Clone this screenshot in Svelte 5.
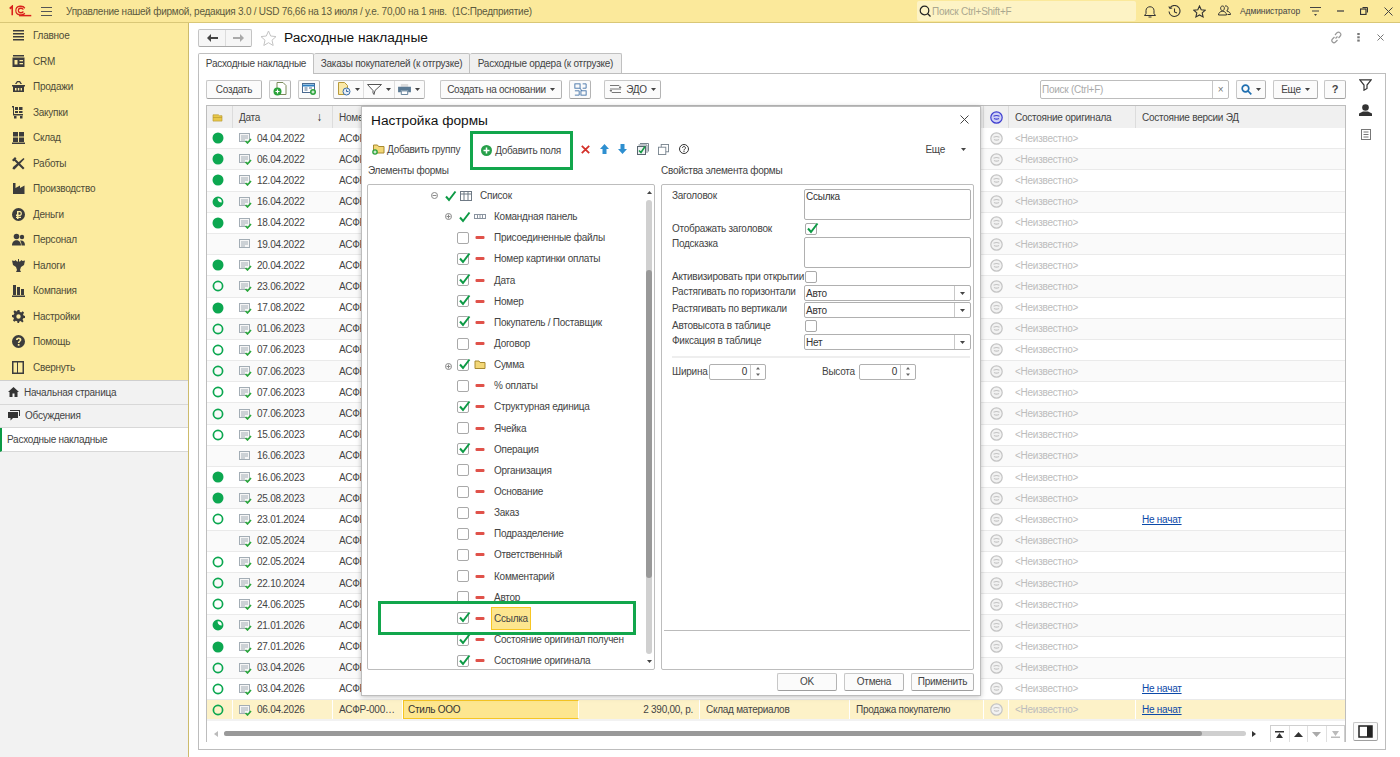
<script>
    const menu = [
        ['menu', 'Главное'], ['crm', 'CRM'], ['basket', 'Продажи'], ['cart', 'Закупки'],
        ['grid', 'Склад'], ['tools', 'Работы'], ['factory', 'Производство'], ['rub', 'Деньги'],
        ['people', 'Персонал'], ['eagle', 'Налоги'], ['bars', 'Компания'], ['gear', 'Настройки'],
        ['help', 'Помощь'], ['panel', 'Свернуть']
    ]

    // status: f - full, o - open, p - partial; doc: true when the document is posted
    const rows = [
        ['f', 1, '04.04.2022'], ['f', 1, '06.04.2022'], ['f', 1, '12.04.2022'], ['p', 1, '16.04.2022'],
        ['f', 1, '18.04.2022'], ['', 0, '19.04.2022'], ['f', 1, '20.04.2022'], ['o', 1, '23.06.2022'],
        ['f', 1, '17.08.2022'], ['o', 1, '01.06.2023'], ['o', 1, '07.06.2023'], ['o', 1, '07.06.2023'],
        ['o', 1, '07.06.2023'], ['o', 1, '07.06.2023'], ['o', 1, '15.06.2023'], ['', 0, '16.06.2023'],
        ['f', 1, '16.06.2023'], ['f', 1, '25.08.2023'], ['o', 1, '23.01.2024', 1], ['', 1, '02.05.2024'],
        ['o', 1, '02.05.2024'], ['o', 1, '22.10.2024'], ['o', 1, '24.06.2025'], ['p', 1, '21.01.2026'],
        ['f', 1, '27.01.2026'], ['o', 1, '03.04.2026'], ['o', 1, '03.04.2026', 1], ['o', 1, '06.04.2026', 1, 1]
    ]

    const leaves = [
        ['Присоединенные файлы', 0], ['Номер картинки оплаты', 1], ['Дата', 1], ['Номер', 1],
        ['Покупатель / Поставщик', 1], ['Договор', 0], ['Сумма', 1, 'folder'], ['% оплаты', 0],
        ['Структурная единица', 1], ['Ячейка', 0], ['Операция', 1], ['Организация', 0],
        ['Основание', 0], ['Заказ', 0], ['Подразделение', 0], ['Ответственный', 0],
        ['Комментарий', 0], ['Автор', 0], ['Ссылка', 1, 'sel'], ['Состояние оригинал получен', 1],
        ['Состояние оригинала', 1]
    ]
</script>

{#snippet tick()}
    <svg class="tick" width="13" height="12" viewBox="0 0 13 12"><path d="M2 6.500 5 10 11.500 1.500" fill="none" stroke="#0d9a45" stroke-width="2"/></svg>
{/snippet}

{#snippet checkbox(on)}
    <span class="cb">{#if on}{@render tick()}{/if}</span>
{/snippet}

{#snippet docIcon(posted)}
    <svg class="doc" width="13" height="12" viewBox="0 0 13 12">
        <rect x="0.500" y="1.500" width="10" height="8" fill="#f6f6f6" stroke="#a3adb5"/>
        <path d="M2 4h7M2 6h7M2 8h4" stroke="#a3adb5"/>
        {#if posted}<path d="M6.500 9 8.500 11l3.500-4" fill="none" stroke="#2aa83c" stroke-width="1.600"/>{/if}
    </svg>
{/snippet}

{#snippet status(s)}
    {#if s === 'f'}
        <svg width="12" height="12" viewBox="0 0 12 12"><circle cx="6" cy="6" r="5.500" fill="#0ca750"/></svg>
    {:else if s === 'o'}
        <svg width="12" height="12" viewBox="0 0 12 12"><circle cx="6" cy="6" r="4.600" fill="none" stroke="#0ca750" stroke-width="1.700"/></svg>
    {:else if s === 'p'}
        <svg width="12" height="12" viewBox="0 0 12 12"><circle cx="6" cy="6" r="4.600" fill="#fff" stroke="#0ca750" stroke-width="1.700"/><path d="M5.500 1.500A4.500 4.500 0 1 0 10.500 6.500Q5.500 7 5.500 1.500z" fill="#0ca750"/></svg>
    {/if}
{/snippet}

{#snippet stateIcon(blue)}
    <svg width="13" height="13" viewBox="0 0 13 13">
        <circle cx="6.500" cy="6.500" r="5.700" fill={blue ? '#cfd0f5' : '#f2f2f2'} stroke={blue ? '#3f3fd0' : '#c4c4c4'} stroke-width="1.200"/>
        <path d="M3.500 5.200c2-1 4-1 6 0M4 7.500c1.600.8 3.400.8 5 0" fill="none" stroke={blue ? '#3f3fd0' : '#c4c4c4'} stroke-width="1.100"/>
    </svg>
{/snippet}

{#snippet caret()}
    <svg class="caret" width="5" height="3" viewBox="0 0 5 3"><path d="M0 0h5L2.500 3z" fill="#444"/></svg>
{/snippet}

{#snippet navIcon(name)}
    <svg width="13" height="13" viewBox="0 0 13 13" fill="#3c3c3c">
        {#if name === 'menu'}
            <path d="M1 1h11v1.500H1zM1 4h11v1.500H1zM1 7h11v1.500H1zM1 10h11v1.500H1z"/>
        {:else if name === 'crm'}
            <path d="M1 0h11v1.500H1zM0.500 2.500h12V12H.5zM2.500 5v4.500h3V5zM7.500 5v1.300h3.500V5zM7.500 8v1.300h3.500V8z" fill-rule="evenodd"/>
        {:else if name === 'basket'}
            <path d="M0 5h13v1.500H12V12H1V6.500H0zM3 8v2.500h1.500V8zM5.800 8v2.500h1.500V8zM8.600 8v2.500H10V8zM3 4 5 1h3l2 3H8.500L7.300 2.300H5.700L4.500 4z" fill-rule="evenodd"/>
        {:else if name === 'cart'}
            <path d="M0 0h2v8h9v1.500H1V1.500H0zM3 1h3v3H3zM7 1h3.500v3H7zM3 5h3v2H3zM7 5h3.500v2H7zM2 10h2.500v2.500H2zM8 10h2.500v2.500H8z"/>
        {:else if name === 'grid'}
            <path d="M1 1h5v4.500H1zM7 1h5v4.500H7zM1 6.500h5V11H1zM7 6.500h5V11H7zM0 11.500h13V13H0z"/>
        {:else if name === 'tools'}
            <path d="M1 2.500 2.500 1l10 10-1.500 1.500zM11.500 1l1 1-10 10.500-2-.5.500-2zM0 3l3-3 1.500 1.500-3 3z"/>
        {:else if name === 'factory'}
            <path d="M1 1h2.500v5L8 3.500V6l4.500-2.500V12H1z"/>
        {:else if name === 'rub'}
            <path d="M6.500 0a6.500 6.500 0 1 1 0 13 6.500 6.500 0 0 1 0-13zM5 3v3.500H4V8h1v.8H4V10h1v1h1.500v-1H9V8.800H6.500V8H8c2.500 0 2.500-5 0-5zM6.500 4.200H8c.9 0 .9 2.500 0 2.500H6.500z" fill-rule="evenodd"/>
        {:else if name === 'people'}
            <circle cx="4.500" cy="3.500" r="2.800"/><circle cx="10" cy="4" r="2.200"/><path d="M0 12.500c0-7 9-7 9 0zM9.500 12.500h3.500c0-4-2-5.500-5-5 1 1 1.500 3 1.500 5z"/>
        {:else if name === 'eagle'}
            <path d="M6 0h1v2.500h1l1.500-1.500 1 1L13 1.500 12 6 9 8 8 11l1 2H4l1-2-1-3-3-2L0 1.500 2.500 2l1-1L5 2.500h1z"/>
        {:else if name === 'bars'}
            <path d="M1 1h3v10H1zM5 3h3v8H5zM9 5h3v6H9zM0 11.500h13V13H0z"/>
        {:else if name === 'gear'}
            <path d="M5.500 0h2l.3 1.800 1.400.6L10.700 1.300l1.400 1.400L11 4.200l.6 1.400 1.400.4v2l-1.800.3-.6 1.400 1 1.500-1.400 1.400L8.700 11l-1.300.5L7 13H5.500l-.3-1.800L3.800 10.700 2.300 11.700.9 10.300 2 8.800 1.400 7.400 0 7V5l1.800-.3.600-1.400-1-1.600L2.800.3 4.300 1.400l1-.4zM6.500 4.300a2.200 2.200 0 1 0 0 4.400 2.200 2.200 0 0 0 0-4.400z" fill-rule="evenodd"/>
        {:else if name === 'help'}
            <path d="M6.500 0a6.500 6.500 0 1 1 0 13 6.500 6.500 0 0 1 0-13zM4 5h1.700c0-1.500 2-1.500 2 0 0 1-1.900 1.200-1.900 3h1.700c0-1.500 1.900-1.500 1.900-3.200C9.400 1.800 4 1.800 4 5zM5.800 9v1.700h1.700V9z" fill-rule="evenodd"/>
        {:else if name === 'panel'}
            <path d="M0 0h12v13H0zM1.500 1.500v10h3.500v-10z M6 1.500v10h4.500v-10z" fill-rule="evenodd"/>
        {/if}
    </svg>
{/snippet}

<div class="app">
    <header class="top">
        <svg class="logo" width="23" height="12" viewBox="0 0 32 13" preserveAspectRatio="none" fill="none" stroke="#d9201c">
            <path d="M1 4 4.500 1.500V11" stroke-width="2.200"/>
            <path d="M22 3.500C20 .5 9.500 0 9.500 6s10.500 5.500 12.500 3M20 5C18.500 3 13 3 13 6s5.500 3 7 1" stroke-width="1.600"/>
            <path d="M14 11.500h17" stroke-width="1.600"/>
        </svg>
        <svg class="burger" width="11" height="9" viewBox="0 0 11 9"><path d="M0 .5h11M0 4.500h11M0 8.500h11" stroke="#555"/></svg>
        <span class="app-title">Управление нашей фирмой, редакция 3.0 / USD 76,66 на 13 июля / у.е. 70,00 на 1 янв. &nbsp;(1С:Предприятие)</span>
        <div class="gsearch">
            <svg width="12" height="12" viewBox="0 0 12 12" fill="none" stroke="#222" stroke-width="1.200"><circle cx="5.500" cy="5.500" r="4.300"/><path d="m8.500 8.500 3 3"/></svg>
            <span>Поиск Ctrl+Shift+F</span>
        </div>
        <div class="top-icons">
            <svg width="12" height="13" viewBox="0 0 12 13" fill="none" stroke="#333"><path d="M.5 10.500h11L10 8.500V5.500c0-5-8-5-8 0v3zM4.500 12h3"/></svg>
            <svg width="13" height="13" viewBox="0 0 13 13" fill="none" stroke="#333" stroke-width="1.100"><path d="M2.200 2.500A5.500 5.500 0 1 1 1 6.500M.8 1.500 2 3.500l2.200-.5M6.500 3.500v3.500l2.500 1"/></svg>
            <svg width="13" height="13" viewBox="0 0 13 13" fill="none" stroke="#333" stroke-width="1.100"><path d="m6.500 1 1.700 3.700 4 .5-3 2.700.9 4-3.600-2-3.600 2 .9-4-3-2.700 4-.5z"/></svg>
            <svg width="13" height="12" viewBox="0 0 13 12" fill="none" stroke="#333"><path d="M4.500 1c-2.500 0-2.500 4 0 5-2.500.5-4 2-4 4h8c0-2-1.500-3.500-4-4 2.500-1 2.500-5 0-5zM7 1c2-.5 3.500 1 3 3-.2 1-.7 1.500-1.300 2 2 .5 3.800 1.500 3.800 3.500h-3"/></svg>
        </div>
        <span class="user">Администратор</span>
        <div class="win">
            <svg width="11" height="9" viewBox="0 0 11 9"><path d="M0 .5h11M2 4h7" stroke="#444"/><path d="M4 7h3L5.500 9z" fill="#444"/></svg>
            <svg width="7" height="2" viewBox="0 0 7 2"><path d="M0 1h7" stroke="#444" stroke-width="1.300"/></svg>
            <svg width="8" height="8" viewBox="0 0 8 8" fill="none" stroke="#333"><rect x=".5" y="2" width="5.500" height="5.500" stroke-width="1.200"/><path d="M2.500 .5h5v5"/></svg>
            <svg width="9" height="9" viewBox="0 0 9 9"><path d="m.5.5 8 8m0-8-8 8" stroke="#444"/></svg>
        </div>
    </header>

    <div class="body">
        <aside class="side">
            <nav class="nav">
                {#each menu as [icon, label]}
                    <div class="nav-item">
                        {@render navIcon(icon)}
                        <span>{label}</span>
                    </div>
                {/each}
            </nav>
            <div class="open-list">
                <div class="open-item">
                    <svg width="11" height="10" viewBox="0 0 11 10" fill="#333"><path d="M5.500 0 11 5H9.500v5H6.500V6.500h-2V10h-3V5H0z"/></svg>
                    <span>Начальная страница</span>
                </div>
                <div class="open-item">
                    <svg width="12" height="11" viewBox="0 0 12 11" fill="#333"><path d="M2 0h10v6h-1V1H2zM0 2h10v6H5L2.500 10.500V8H0z"/></svg>
                    <span>Обсуждения</span>
                </div>
                <div class="open-item current"><span>Расходные накладные</span></div>
            </div>
        </aside>

        <main class="main">
            <div class="head">
                <div class="nav-btns">
                    <button class="arrow">
                        <svg width="11" height="8" viewBox="0 0 11 8"><path d="M4 0v3h7v2H4v3L0 4z" fill="#444"/></svg>
                    </button>
                    <button class="arrow">
                        <svg width="11" height="8" viewBox="0 0 11 8"><path d="M7 0v3H0v2h7v3l4-4z" fill="#aaa"/></svg>
                    </button>
                </div>
                <svg class="star" width="17" height="16" viewBox="0 0 17 16"><path d="m8.500 1 2.200 5 5.300.6-4 3.600 1.200 5.300-4.700-2.800-4.700 2.800 1.200-5.300-4-3.600 5.300-.6z" fill="#fff" stroke="#c4c4c4"/></svg>
                <h1>Расходные накладные</h1>
                <div class="head-tools">
                    <svg class="link" width="13" height="13" viewBox="0 0 13 13" fill="none" stroke="#999" stroke-width="1.200"><path d="M5.500 7.500 7.500 5.500M5 4l2-2.300c2-1.800 5 1 3.300 3.300L8.500 7M4.500 6 2.500 8c-2 2 1 5 3 3L7.500 9"/></svg>
                    <svg width="3" height="9" viewBox="0 0 3 11" fill="#777"><rect y="0" width="3" height="2.500"/><rect y="4" width="3" height="2.500"/><rect y="8" width="3" height="2.500"/></svg>
                    <svg width="7" height="7" viewBox="0 0 7 7"><path d="m.5.5 6 6m0-6-6 6" stroke="#777"/></svg>
                </div>
            </div>

            <div class="tabs">
                <div class="tab active">Расходные накладные</div>
                <div class="tab w2">Заказы покупателей (к отгрузке)</div>
                <div class="tab w3">Расходные ордера (к отгрузке)</div>
            </div>

            <section class="panel">
                <div class="work">
                    <div class="toolbar">
                        <button class="btn create">Создать</button>
                        <button class="btn ico">
                            <svg width="14" height="14" viewBox="0 0 14 14"><path d="M4 .5h6l3 3v9H4z" fill="#fff" stroke="#7a8a5a"/><circle cx="4.500" cy="9.500" r="4" fill="#2aa23a"/><path d="M2.500 9.500h4M4.500 7.500v4" stroke="#fff" stroke-width="1.200"/></svg>
                        </button>
                        <button class="btn ico">
                            <svg width="15" height="14" viewBox="0 0 15 14"><rect x=".5" y="1.500" width="12" height="9" fill="#fff" stroke="#4a6a90"/><path d="M.5 3.500h12" stroke="#2b7fc2" stroke-width="2"/><path d="M2.500 6h3M7 6h3M2.500 8h3" stroke="#4a6a90"/><circle cx="11" cy="10" r="3" fill="#2aa23a"/><path d="M9.500 10h3M11 8.500v3" stroke="#fff"/></svg>
                        </button>
                        <div class="group">
                            <button class="seg">
                                <svg width="14" height="14" viewBox="0 0 14 14"><path d="M1.500.5h6l3 3v9h-9z" fill="#fbe9a8" stroke="#b89a3a"/><circle cx="9.500" cy="9.500" r="3.500" fill="#e8eef6" stroke="#3a6ea8"/><path d="M9.500 7.500v2h2" stroke="#3a6ea8" fill="none"/></svg>
                                {@render caret()}
                            </button>
                            <button class="seg">
                                <svg width="15" height="11" viewBox="0 0 15 11"><path d="M.5.500h14L8 6.500l-1 4-1-1.500V6.500z" fill="#fff" stroke="#555"/></svg>
                                {@render caret()}
                            </button>
                            <button class="seg">
                                <svg width="13" height="11" viewBox="0 0 14 12"><path d="M3 0h8v3H3z" fill="#ddd"/><path d="M0 3h14v6h-3V7H3v2H0z" fill="#5b7a94"/><path d="M3.500 7.500h7v4h-7z" fill="#fff" stroke="#5b7a94"/></svg>
                                {@render caret()}
                            </button>
                        </div>
                        <button class="btn basis">Создать на основании {@render caret()}</button>
                        <button class="btn ico">
                            <svg width="13" height="13" viewBox="0 0 15 15" fill="none" stroke="#3d6ea5"><rect x="1" y="1" width="6" height="5"/><rect x="8" y="9" width="6" height="5"/><path d="M10 1h4v5h-4M1 9h5v5H1"/><path d="M7 6l2 3" /></svg>
                        </button>
                        <button class="btn edo">
                            <svg width="13" height="12" viewBox="0 0 13 12" fill="none" stroke="#777"><path d="M1 2.500h9l2 2-2 0M12 9.500H3L1 7.500h2M1 6h11"/></svg>
                            ЭДО {@render caret()}
                        </button>
                        <div class="search">
                            <span class="search-ph">Поиск (Ctrl+F)</span>
                            <span class="search-x">×</span>
                        </div>
                        <button class="btn find">
                            <svg width="11" height="11" viewBox="0 0 11 11" fill="none" stroke="#1f6fb0" stroke-width="1.700"><circle cx="4.500" cy="4.500" r="3.300"/><path d="m7 7 3.300 3.300"/></svg>
                            {@render caret()}
                        </button>
                        <button class="btn more">Еще {@render caret()}</button>
                        <button class="btn q">?</button>
                    </div>

                    <div class="table">
                        <div class="row hdr">
                            <div class="c mid first">
                                <svg width="11" height="9" viewBox="0 0 12 10"><path d="M1 2h6l1 1h3v6H1z" fill="#e8c84a" stroke="#b5962c" stroke-width=".7"/><path d="M1 5h10" stroke="#b5962c" stroke-width=".7"/></svg>
                            </div>
                            <div class="c date-h"><span>Дата</span><b>↓</b></div>
                            <div class="c">Номер</div>
                            <div class="c"></div>
                            <div class="c"></div>
                            <div class="c"></div>
                            <div class="c"></div>
                            <div class="c mid">{@render stateIcon(true)}</div>
                            <div class="c">Состояние оригинала</div>
                            <div class="c">Состояние версии ЭД</div>
                        </div>
                        {#each rows as [st, posted, date, link, sel], i}
                            <div class="row" class:odd={i % 2 === 1} class:sel={sel}>
                                <div class="c mid first">{@render status(st)}</div>
                                <div class="c date">{@render docIcon(posted)}<span>{date}</span></div>
                                <div class="c num">АСФР-000…</div>
                                {#if sel}
                                    <div class="c cust">Стиль ООО</div>
                                    <div class="c sum">2 390,00, р.</div>
                                    <div class="c">Склад материалов</div>
                                    <div class="c">Продажа покупателю</div>
                                {:else}
                                    <div class="c"></div><div class="c"></div><div class="c"></div><div class="c"></div>
                                {/if}
                                <div class="c mid">{@render stateIcon(false)}</div>
                                <div class="c unknown">&lt;Неизвестно&gt;</div>
                                <div class="c">{#if link}<a href="#top">Не начат</a>{/if}</div>
                            </div>
                        {/each}
                        <div class="tfoot">
                            <svg class="arr" width="4" height="6" viewBox="0 0 4 6"><path d="M4 0v6L0 3z" fill="#bbb"/></svg>
                            <div class="hscroll"><div class="hthumb"></div></div>
                            <svg class="arr" width="4" height="6" viewBox="0 0 4 6"><path d="M0 0v6l4-3z" fill="#333"/></svg>
                            <div class="pager">
                                <span><svg width="9" height="7" viewBox="0 0 9 7"><path d="M0 0h9v1.500H0zM4.500 2 8 7H1z" fill="#333"/></svg></span>
                                <span><svg width="9" height="5" viewBox="0 0 9 5"><path d="M4.500 0 9 5H0z" fill="#333"/></svg></span>
                                <span><svg width="9" height="5" viewBox="0 0 9 5"><path d="M4.500 5 9 0H0z" fill="#aaa"/></svg></span>
                                <span><svg width="9" height="7" viewBox="0 0 9 7"><path d="M0 5.500h9V7H0zM4.500 5 8 0H1z" fill="#bbb"/></svg></span>
                            </div>
                        </div>
                    </div>
                </div>

                <div class="rail">
                    <div class="rail-icons">
                        <svg width="13" height="12" viewBox="0 0 13 12" fill="none" stroke="#333" stroke-width="1.200"><path d="M.8.800h11.400L8 6v3.500L5 11.200V6z"/></svg>
                        <svg width="13" height="12" viewBox="0 0 13 12" fill="#333"><circle cx="6.500" cy="3.500" r="3.300"/><path d="M0 12V9.500L4 7.500h5l4 2V12z"/></svg>
                        <svg width="10" height="11" viewBox="0 0 10 11" fill="none" stroke="#777"><rect x=".5" y=".5" width="9" height="10"/><path d="M2.500 3h5M2.500 5.500h5M2.500 8h5"/></svg>
                    </div>
                    <button class="btn toggle">
                        <svg width="15" height="13" viewBox="0 0 15 13"><path d="M1 1h13v11H1z" fill="#fff" stroke="#222" stroke-width="1.500"/><path d="M9 1h5v11H9z" fill="#222"/></svg>
                    </button>
                </div>
            </section>
        </main>
    </div>

    <div class="dialog">
        <div class="dlg-head">
            <h2>Настройка формы</h2>
            <svg width="9" height="9" viewBox="0 0 9 9"><path d="m.5.500 8 8m0-8-8 8" stroke="#444"/></svg>
        </div>
        <div class="dlg-bar">
            <span class="cmd">
                <svg width="13" height="12" viewBox="0 0 13 12"><path d="M1.500 2h4l1 1.500H12V10H1.500z" fill="#f3d777" stroke="#a88a30"/><circle cx="3" cy="9" r="2.800" fill="#2aa23a"/><path d="M1.500 9h3M3 7.500v3" stroke="#fff"/></svg>
                Добавить группу
            </span>
            <span class="cmd boxed">
                <svg width="11" height="11" viewBox="0 0 11 11"><circle cx="5.500" cy="5.500" r="5.500" fill="#27a04a"/><path d="M2.500 5.500h6M5.500 2.500v6" stroke="#fff" stroke-width="1.500"/></svg>
                Добавить поля
            </span>
            <span class="bar-icons">
                <svg width="9" height="9" viewBox="0 0 9 9"><path d="m.8.800 7.400 7.400m0-7.400L.8 8.200" stroke="#d4312a" stroke-width="1.800"/></svg>
                <svg width="9" height="10" viewBox="0 0 9 10"><path d="M4.500 0 9 5H6.500v5h-4V5H0z" fill="#2e8fd0"/></svg>
                <svg width="9" height="10" viewBox="0 0 9 10"><path d="M4.500 10 9 5H6.500V0h-4v5H0z" fill="#2e8fd0"/></svg>
                <svg width="12" height="12" viewBox="0 0 12 12"><path d="M3 .5h8.500v8M1.500 2h8.500v8" fill="none" stroke="#79858f"/><rect x=".5" y="3.500" width="8" height="8" fill="#eef0f2" stroke="#59656f"/><path d="m2 7.500 2 2 4-6" fill="none" stroke="#159a45" stroke-width="1.600"/></svg>
                <svg width="11" height="11" viewBox="0 0 12 12" fill="#fff" stroke="#79858f"><rect x="3.500" y=".5" width="8" height="8"/><rect x=".5" y="3.500" width="8" height="8"/></svg>
                <svg width="10" height="10" viewBox="0 0 10 10" fill="none" stroke="#333"><circle cx="5" cy="5" r="4.500"/><path d="M3.500 4c0-2 3-2 3 0 0 1-1.500 1-1.500 2.500M5 7v1"/></svg>
            </span>
            <span class="dlg-more">Еще {@render caret()}</span>
        </div>
        <div class="dlg-cols">
            <div class="col-left">
                <div class="cap">Элементы формы</div>
                <div class="tree">
                    <div class="node lvl0">
                        <svg class="exp" width="7" height="7" viewBox="0 0 7 7" fill="none" stroke="#888"><circle cx="3.500" cy="3.500" r="3"/><path d="M1.500 3.500h4"/></svg>
                        <span class="slot">{@render tick()}</span>
                        <svg class="slot" width="12" height="10" viewBox="0 0 12 10" fill="none" stroke="#6f7a85"><rect x=".5" y=".5" width="11" height="9"/><path d="M.5 3h11M4 .5v9M8 .5v9"/></svg>
                        <span class="lab">Список</span>
                    </div>
                    <div class="node lvl1">
                        <svg class="exp" width="7" height="7" viewBox="0 0 7 7" fill="none" stroke="#888"><circle cx="3.500" cy="3.500" r="3"/><path d="M1.500 3.500h4M3.500 1.500v4"/></svg>
                        <span class="slot">{@render tick()}</span>
                        <svg class="slot" width="12" height="5" viewBox="0 0 12 5" fill="none" stroke="#8a94a0"><rect x=".5" y=".5" width="11" height="4"/><path d="M3.500 1v3M6 1v3M8.500 1v3"/></svg>
                        <span class="lab">Командная панель</span>
                    </div>
                    {#each leaves as [label, on, kind]}
                        <div class="node lvl1">
                            <span class="exp">
                                {#if kind === 'folder'}
                                    <svg width="7" height="7" viewBox="0 0 7 7" fill="none" stroke="#888"><circle cx="3.500" cy="3.500" r="3"/><path d="M1.500 3.500h4M3.500 1.500v4"/></svg>
                                {/if}
                            </span>
                            <span class="slot cb-slot">{@render checkbox(on)}</span>
                            {#if kind === 'folder'}
                                <svg class="slot" width="11" height="9" viewBox="0 0 11 9"><path d="M.5 1h4l1 1.500h5V8.500h-10z" fill="#f3d777" stroke="#a88a30"/></svg>
                            {:else}
                                <svg class="slot" width="9" height="3" viewBox="0 0 9 3"><rect width="9" height="3" rx="1" fill="#e0524a"/></svg>
                            {/if}
                            <span class="lab" class:picked={kind === 'sel'}>{label}</span>
                        </div>
                    {/each}
                    <div class="vscroll">
                        <svg width="5" height="3" viewBox="0 0 5 3"><path d="M0 3h5L2.500 0z" fill="#444"/></svg>
                        <div class="vtrack"><div class="vthumb"></div></div>
                        <svg width="5" height="3" viewBox="0 0 5 3"><path d="M0 0h5L2.500 3z" fill="#444"/></svg>
                    </div>
                    <div class="mark"></div>
                </div>
            </div>
            <div class="col-right">
                <div class="cap">Свойства элемента формы</div>
                <div class="props">
                    <div class="form">
                        <span>Заголовок</span><div class="field area">Ссылка</div>
                        <span>Отображать заголовок</span><div>{@render checkbox(1)}</div>
                        <span>Подсказка</span><div class="field area"></div>
                        <span>Активизировать при открытии</span><div>{@render checkbox(0)}</div>
                        <span>Растягивать по горизонтали</span><div class="field sel-f"><i>Авто</i><em>{@render caret()}</em></div>
                        <span>Растягивать по вертикали</span><div class="field sel-f"><i>Авто</i><em>{@render caret()}</em></div>
                        <span>Автовысота в таблице</span><div>{@render checkbox(0)}</div>
                        <span>Фиксация в таблице</span><div class="field sel-f"><i>Нет</i><em>{@render caret()}</em></div>
                    </div>
                    <div class="sep"></div>
                    <div class="sizes">
                        <span class="s1">Ширина</span>
                        <div class="field spin"><i>0</i><em><svg width="4" height="9" viewBox="0 0 4 9"><path d="M2 0 4 2.500H0zM2 9 4 6.500H0z" fill="#666"/></svg></em></div>
                        <span class="s2">Высота</span>
                        <div class="field spin"><i>0</i><em><svg width="4" height="9" viewBox="0 0 4 9"><path d="M2 0 4 2.500H0zM2 9 4 6.500H0z" fill="#666"/></svg></em></div>
                    </div>
                    <div class="props-end"></div>
                </div>
            </div>
        </div>
        <div class="dlg-foot">
            <button class="btn ok">OK</button>
            <button class="btn cancel">Отмена</button>
            <button class="btn apply">Применить</button>
        </div>
    </div>
</div>

<style>
    :global(body) {
        margin: 0;
        font-family: 'Liberation Sans', Arial, sans-serif;
        font-size: 10px;
        letter-spacing: -0.250px;
        color: #444;
        background: #fff;
    }

    .app {
        position: relative;
        width: 1400px;
        height: 757px;
        overflow: hidden;
        display: flex;
        flex-direction: column;
    }

    /* top bar */
    .top {
        height: 23px;
        box-sizing: border-box;
        flex: none;
        display: flex;
        align-items: center;
        background: #fbe99b;
        border-bottom: 1px solid #d9c777;
    }

    .logo { margin-left: 9px; }
    .burger { margin-left: 9px; }

    .app-title {
        margin-left: 14px;
        width: 851px;
        color: #5c5a3e;
        white-space: nowrap;
    }

    .gsearch {
        width: 219px;
        height: 20px;
        display: flex;
        align-items: center;
        gap: 1px;
        padding-left: 2px;
        box-sizing: border-box;
        background: #fdf3c5;
        border-radius: 2px;
        color: #aaa78f;
    }

    .top-icons {
        display: flex;
        align-items: center;
        gap: 12px;
        margin-left: 8px;
        width: 96px;
    }

    .user {
        width: 62px;
        font-size: 8.500px;
        letter-spacing: -0.100px;
        color: #444;
        white-space: nowrap;
    }

    .win {
        flex: 1;
        display: grid;
        grid-template-columns: 26px 24px 24px 24px;
        align-items: center;
        justify-items: center;
    }

    /* left side */
    .body {
        flex: 1;
        display: flex;
        min-height: 0;
    }

    .side {
        width: 189px;
        box-sizing: border-box;
        flex: none;
        display: flex;
        flex-direction: column;
        border-right: 1px solid #cdbb6c;
        background: #f2f2f2;
    }

    .nav {
        background: #fceb9f;
        height: 358px;
        box-sizing: border-box;
        border-bottom: 1px solid #cfcfcf;
    }

    .nav-item {
        height: 25.500px;
        display: flex;
        align-items: center;
        gap: 8px;
        padding-left: 12px;
        color: #4f4c38;
    }

    .open-list { display: flex; flex-direction: column; }

    .open-item {
        height: 23.500px;
        display: flex;
        align-items: center;
        gap: 5px;
        padding-left: 8px;
        box-sizing: border-box;
        border-bottom: 1px solid #d8d8d8;
        color: #444;
    }

    .current {
        background: #fff;
        border-left: 2px solid #0b9a45;
        padding-left: 5px;
    }

    /* main */
    .main {
        flex: 1;
        min-width: 0;
        padding-left: 9px;
        display: flex;
        flex-direction: column;
    }

    .head {
        height: 29px;
        flex: none;
        display: flex;
        align-items: center;
    }

    .nav-btns {
        display: flex;
        border: 1px solid #c4c4c4;
        border-bottom-color: #a8a8a8;
        border-radius: 2px;
        background: #f6f6f6;
        height: 16px;
        margin-top: 1px;
    }

    .arrow {
        width: 26px;
        padding: 0;
        border: 0;
        background: transparent;
        display: flex;
        align-items: center;
        justify-content: center;
    }

    .arrow + .arrow { border-left: 1px solid #dcdcdc; }

    .star { margin-left: 8px; }

    h1 {
        margin: 0 0 0 7px;
        font-size: 13.700px;
        font-weight: 400;
        letter-spacing: 0;
        color: #111;
    }

    .head-tools {
        margin-left: auto;
        display: flex;
        align-items: center;
        gap: 17px;
        padding-right: 16px;
    }

    .link { margin-right: -3px; }

    .tabs {
        height: 21px;
        flex: none;
        display: flex;
        align-items: flex-end;
        position: relative;
        z-index: 1;
    }

    .tab {
        height: 20px;
        width: 156px;
        display: flex;
        align-items: center;
        justify-content: center;
        box-sizing: border-box;
        border: 1px solid #c0c0c0;
        border-bottom: 0;
        border-left: 0;
        background: #f0f0f0;
        border-radius: 2px 2px 0 0;
        color: #444;
    }

    .tab.w3 { width: 152px; }

    .tab.active {
        width: 116px;
        height: 21px;
        background: #fff;
        border-left: 1px solid #c0c0c0;
        position: relative;
        top: 1px;
        padding-bottom: 1px;
    }

    .panel {
        width: 1188px;
        height: 677px;
        flex: none;
        box-sizing: border-box;
        border: 1px solid #bdbdbd;
        display: flex;
        padding: 5px 0 7px 7px;
    }

    .work {
        width: 1140px;
        display: flex;
        flex-direction: column;
    }

    .toolbar {
        height: 20px;
        flex: none;
        display: flex;
        align-items: center;
        margin-bottom: 6px;
    }

    .btn {
        height: 19px;
        padding: 0;
        box-sizing: border-box;
        font: inherit;
        letter-spacing: inherit;
        color: #444;
        background: #fbfbfb;
        border: 1px solid #c8c8c8;
        border-bottom-color: #9f9f9f;
        border-right-color: #b4b4b4;
        border-radius: 2px;
        display: flex;
        align-items: center;
        justify-content: center;
        gap: 4px;
    }

    .create { width: 56px; }
    .ico { width: 22px; margin-left: 7px; }

    .group {
        margin-left: 13px;
        height: 19px;
        width: 92px;
        box-sizing: border-box;
        display: flex;
        border: 1px solid #c8c8c8;
        border-bottom-color: #9f9f9f;
        border-radius: 2px;
        background: #fbfbfb;
    }

    .seg {
        flex: 1;
        padding: 0;
        border: 0;
        background: transparent;
        display: flex;
        align-items: center;
        justify-content: center;
        gap: 4px;
    }

    .seg + .seg { border-left: 1px solid #dedede; }

    .basis { width: 122px; margin-left: 15px; }
    .edo { width: 57px; margin-left: 13px; }

    .search {
        margin-left: 379px;
        width: 189px;
        height: 19px;
        box-sizing: border-box;
        border: 1px solid #bdbdbd;
        border-radius: 2px;
        display: flex;
        align-items: center;
        justify-content: space-between;
    }

    .search-ph { padding-left: 1px; color: #aaa; }

    .search-x {
        width: 15px;
        height: 100%;
        border-left: 1px solid #c8c8c8;
        display: flex;
        align-items: center;
        justify-content: center;
        color: #777;
    }

    .find { width: 30px; margin-left: 7px; }
    .more { width: 45px; margin-left: 7px; }
    .q { width: 22px; margin-left: 6px; font-weight: 700; font-size: 11px; }

    /* list */
    .table {
        flex: 1;
        border: 1px solid #bdbdbd;
        display: flex;
        flex-direction: column;
        min-height: 0;
    }

    .row {
        display: grid;
        grid-template-columns: 26px 100px 70px 176px 121px 150px 134px 25px 127px 1fr;
        height: 21.200px;
        flex: none;
        box-sizing: border-box;
        border-bottom: 1px solid #eaeaea;
        align-items: center;
    }

    .row.odd { background: #fafafa; }
    .row.sel { background: #fdf2c8; border-bottom: 2px solid #f2f2f2; }

    .hdr {
        height: 22px;
        background: #f0f0f0;
        border-bottom: 0;
    }

    .c {
        height: 100%;
        box-sizing: border-box;
        display: flex;
        align-items: center;
        padding-left: 6px;
        white-space: nowrap;
        overflow: hidden;
        min-width: 0;
    }

    .mid { padding: 0; justify-content: center; }
    .first { padding-right: 4px; }
    .hdr .c { border-right: 1px solid #dcdcdc; }
    .hdr .c:last-child { border-right: 0; }
    .date-h { justify-content: space-between; padding-right: 10px; }
    .date-h b { font-weight: 400; color: #333; font-size: 12px; }
    .date { gap: 5px; }
    .doc { flex: none; }
    .row.sel .c { border-right: 1px solid #fff; }
    .row.sel .c:last-child { border-right: 0; }

    .row .cust {
        background: #fde68f;
        border: 1.500px solid #f7c623;
        padding-left: 4px;
        color: #333;
    }

    .sum { justify-content: flex-end; padding-right: 6px; }
    .unknown { color: #bcbcbc; }
    a { color: #0b49a8; text-decoration: underline; }

    .tfoot {
        flex: 1;
        display: flex;
        align-items: center;
        padding: 4px 0 0 7px;
        position: relative;
        background: #fff;
    }

    .arr { flex: none; }

    .hscroll {
        width: 1022px;
        height: 5px;
        margin: 0 6px;
        background: #cfcfcf;
        border-radius: 3px;
    }

    .hthumb {
        width: 978px;
        height: 100%;
        background: #999;
        border-radius: 3px;
    }

    .pager {
        margin-left: auto;
        display: flex;
        align-self: flex-end;
        height: 16px;
        border: 1px solid #cfcfcf;
        border-bottom: 0;
    }

    .pager span {
        width: 17.500px;
        display: flex;
        align-items: center;
        justify-content: center;
    }

    .pager span + span { border-left: 1px solid #e0e0e0; }

    .rail {
        flex: 1;
        display: flex;
        flex-direction: column;
        align-items: center;
    }

    .rail-icons {
        display: flex;
        flex-direction: column;
        align-items: center;
        gap: 13px;
    }

    .toggle { margin-top: auto; width: 25px; margin-bottom: 1px; }

    /* dialog */
    .dialog {
        position: absolute;
        left: 361px;
        top: 106px;
        width: 620px;
        height: 590px;
        box-sizing: border-box;
        background: #fff;
        border: 1px solid #bdbdbd;
        box-shadow: 0 1px 5px rgba(0, 0, 0, 0.25);
        display: flex;
        flex-direction: column;
    }

    .dlg-head {
        height: 24px;
        flex: none;
        display: flex;
        align-items: center;
        justify-content: space-between;
        padding: 0 11px 0 9px;
    }

    h2 {
        margin: 3px 0 0;
        font-size: 13.700px;
        font-weight: 400;
        letter-spacing: 0;
        color: #111;
    }

    .dlg-bar {
        height: 32px;
        flex: none;
        display: flex;
        align-items: flex-start;
        position: relative;
        padding-left: 10px;
        box-sizing: border-box;
    }

    .cmd {
        display: flex;
        align-items: center;
        gap: 2px;
        height: 24px;
        margin-top: 6px;
        white-space: nowrap;
    }

    .boxed {
        height: 39px;
        width: 103px;
        margin: 0 0 0 10px;
        box-sizing: border-box;
        border: 3px solid #12a64c;
        padding-left: 8px;
        gap: 3px;
        background: #fff;
    }

    .bar-icons {
        display: flex;
        align-items: center;
        height: 24px;
        margin-top: 6px;
        gap: 9.500px;
        margin-left: 8px;
    }

    .dlg-more {
        margin: 6px 0 0 auto;
        height: 24px;
        display: flex;
        align-items: center;
        gap: 16px;
        padding-right: 14px;
    }

    .dlg-cols {
        flex: 1;
        min-height: 0;
        display: flex;
        gap: 6px;
        padding: 0 6px 0 5px;
    }

    .col-left { width: 288px; display: flex; flex-direction: column; }
    .col-right { width: 313px; display: flex; flex-direction: column; }

    .cap {
        height: 21px;
        flex: none;
        padding: 2px 0 0 1px;
        box-sizing: border-box;
    }

    .col-right .cap { padding-left: 0; }

    .tree, .props {
        height: 486px;
        flex: none;
        box-sizing: border-box;
        border: 1px solid #bdbdbd;
        border-radius: 2px;
        position: relative;
    }

    .node {
        height: 21.150px;
        display: flex;
        align-items: center;
    }

    .lvl0 { padding-left: 63px; }
    .lvl1 { padding-left: 77px; }

    .exp {
        width: 7px;
        height: 7px;
        flex: none;
        margin-right: 4px;
    }

    .slot {
        width: 16px;
        flex: none;
        display: flex;
        justify-content: center;
        align-items: center;
    }

    .lab {
        margin-left: 6px;
        white-space: nowrap;
        color: #444;
    }

    .picked {
        background: #fde68f;
        outline: 1.500px solid #f7c623;
        padding: 5px 2px;
        margin-left: 4px;
    }

    .cb {
        width: 10px;
        height: 10px;
        display: block;
        position: relative;
        border: 1px solid #a9a9a9;
        border-radius: 2px;
        background: #fff;
        box-sizing: content-box;
    }

    .cb-slot .cb { margin-right: 3px; }
    .tick { position: absolute; left: 0; top: -2px; }
    .slot > .tick { position: static; }

    .vscroll {
        position: absolute;
        top: 6px;
        right: 2px;
        width: 6px;
        bottom: 6px;
        display: flex;
        flex-direction: column;
        align-items: center;
        justify-content: space-between;
    }

    .vtrack {
        flex: 1;
        width: 6px;
        margin: 6px 0;
        background: #d0d0d0;
        border-radius: 3px;
        position: relative;
    }

    .vthumb {
        position: absolute;
        top: 70px;
        height: 308px;
        width: 100%;
        background: #999;
        border-radius: 3px;
    }

    .mark {
        position: absolute;
        left: 10px;
        top: 416px;
        width: 258px;
        height: 34px;
        box-sizing: border-box;
        border: 3px solid #12a64c;
    }

    .props {
        padding: 4px 3px 0 10px;
        display: flex;
        flex-direction: column;
    }

    .form {
        display: grid;
        grid-template-columns: 132px 167px;
        grid-template-rows: 33px 15px 33px 15px 17px 17px 15px 16px;
        color: #444;
    }

    .form > span { padding-top: 1px; white-space: nowrap; }
    .form > div .cb { margin: 1px 0 0 1px; }

    .field {
        box-sizing: border-box;
        border: 1px solid #b0b0b0;
        border-radius: 2px;
        background: #fff;
        color: #333;
        display: flex;
    }

    .area { height: 31px; padding: 1px 1px; }
    .sel-f { height: 16px; align-items: center; }
    .field i { font-style: normal; padding-left: 1px; flex: 1; }

    .sel-f em {
        width: 15px;
        height: 100%;
        border-left: 1px solid #c8c8c8;
        display: flex;
        align-items: center;
        justify-content: center;
    }

    .sep {
        height: 2px;
        background: #eee;
        margin: 6px 0 4px;
        width: 298px;
    }

    .sizes {
        display: flex;
        align-items: center;
        height: 17px;
        margin-top: 1px;
    }

    .s1 { width: 37px; }

    .spin {
        width: 57px;
        height: 16px;
        align-items: center;
    }

    .spin i { text-align: right; padding-right: 3px; }

    .spin em {
        width: 14px;
        height: 100%;
        border-left: 1px solid #c8c8c8;
        font-style: normal;
        display: flex;
        align-items: center;
        justify-content: center;
    }

    .s2 { margin-left: 56px; width: 37px; }

    .props-end {
        margin-top: auto;
        margin-bottom: 38px;
        height: 1px;
        background: #bbb;
        margin-left: -8px;
    }

    .dlg-foot {
        height: 27px;
        flex: none;
        display: flex;
        align-items: center;
        justify-content: flex-end;
        gap: 7px;
        padding-right: 6px;
    }

    .ok { width: 60px; height: 18px; }
    .cancel { width: 60px; height: 18px; }
    .apply { width: 63px; height: 18px; }
</style>
